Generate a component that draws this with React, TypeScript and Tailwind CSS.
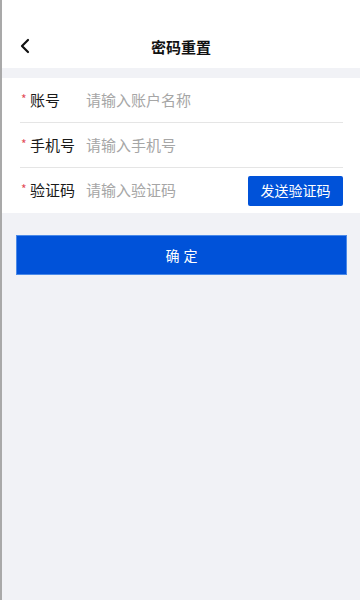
import React from 'react';

const fields = [
  { label: '账号', placeholder: '请输入账户名称' },
  { label: '手机号', placeholder: '请输入手机号' },
  { label: '验证码', placeholder: '请输入验证码', action: '发送验证码' },
];

export default function App() {
  return (
    <div
      className="min-h-[600px] bg-[#f1f2f6] border-l-2 border-[#a9a9a9] flex flex-col"
      style={{ fontFamily: '"Noto Sans CJK SC", "Noto Sans", sans-serif' }}
    >
      {/* header */}
      <div className="bg-white pt-[24px] h-[68px] flex items-center relative">
        <div className="h-[44px] w-full flex items-center justify-center relative">
          <button className="absolute left-[13px] top-[12px] w-[20px] h-[20px] flex items-center justify-center">
            <svg width="12" height="16" viewBox="0 0 12 16" fill="none">
              <path d="M9 2 L3 8 L9 14" stroke="#111" strokeWidth="2.2" strokeLinecap="round" strokeLinejoin="round" />
            </svg>
          </button>
          <h1 className="text-[15px] font-bold text-[#111] leading-none">密码重置</h1>
        </div>
      </div>

      {/* form */}
      <div className="mt-[10px] bg-white pl-[18px] pr-[17px]">
        {fields.map((f, i) => (
          <div
            key={f.label}
            className={`h-[45px] flex items-center ${i < fields.length - 1 ? 'border-b border-[#e5e5e5]' : ''}`}
          >
            <div className="w-[66px] flex items-center shrink-0">
              <span className="text-[#e34d59] text-[12px] leading-none w-[10px] pl-[1px] -mt-[3px]">*</span>
              <span className="text-[15px] text-[#1a1a1a]">{f.label}</span>
            </div>
            <input
              className="flex-1 min-w-0 text-[15px] text-[#222] placeholder:text-[#a6a6a6] outline-none bg-transparent"
              placeholder={f.placeholder}
            />
            {f.action && (
              <button className="h-[30px] w-[95px] bg-[#0052d9] text-white text-[14px] rounded-[2px] shrink-0">
                {f.action}
              </button>
            )}
          </div>
        ))}
      </div>

      <div className="pl-[14px] pr-[13px] pt-[22px]">
        <button className="w-full h-[40px] bg-[#0052d9] text-white text-[14px] tracking-[4px] pl-[4px] border border-[#4b8ae8]">
          确定
        </button>
      </div>
    </div>
  );
}
